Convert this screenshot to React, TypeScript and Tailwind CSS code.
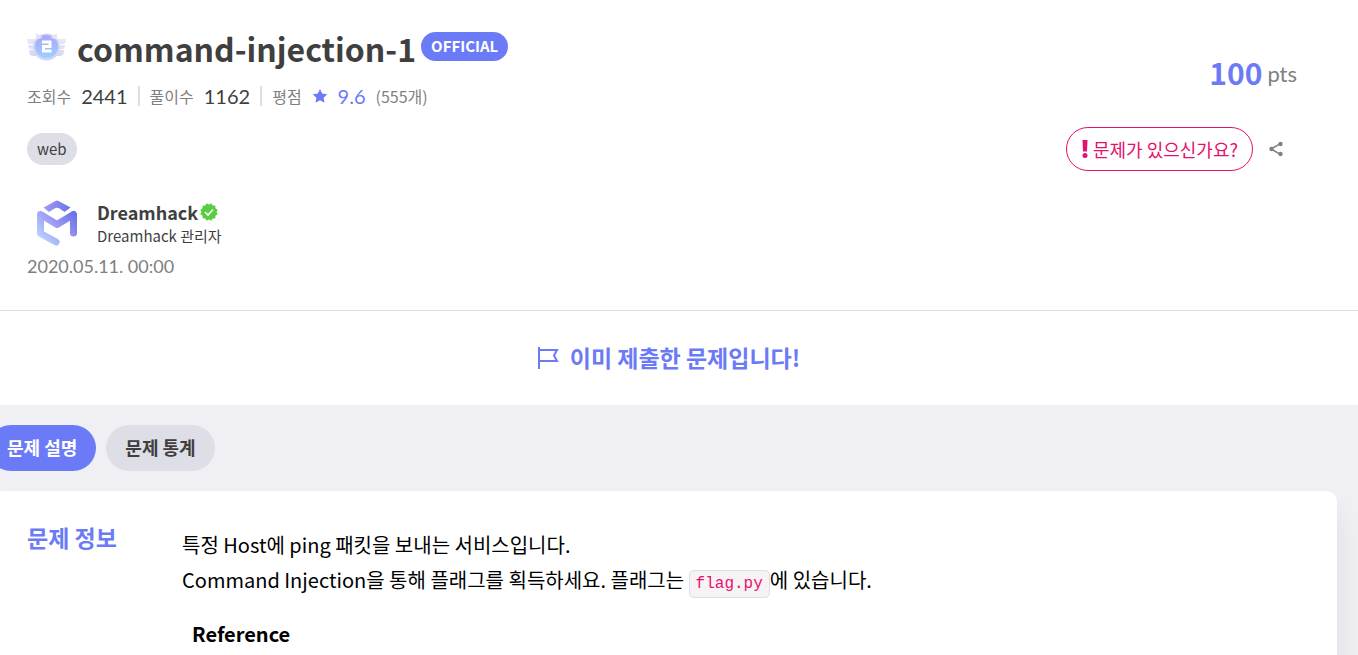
const STATS = [
  { label: '조회수', value: '2441' },
  { label: '풀이수', value: '1162' },
];

const TABS = [
  { label: '문제 설명', active: true },
  { label: '문제 통계', active: false },
];

function TierBadge() {
  return (
    <svg viewBox="0 0 40 30" className="h-[30px] w-10" aria-hidden="true">
      <defs>
        <linearGradient id="tier" x1="0" y1="0" x2="0" y2="1">
          <stop offset="0" stopColor="#a9a6f9" />
          <stop offset="1" stopColor="#9ad2ff" />
        </linearGradient>
        <linearGradient id="wing" x1="0" y1="0" x2="0" y2="1">
          <stop offset="0" stopColor="#e9e9f6" />
          <stop offset="1" stopColor="#d8d6f5" />
        </linearGradient>
      </defs>
      <g fill="url(#wing)">
        <path d="M0 7h10v5H3c-2 0-3-2-3-5zM1 13h9v4H4c-2 0-3-2-3-4zM2 18h8l3 6H6c-3 0-4-3-4-6z" />
        <path d="M39 7H29v5h7c2 0 3-2 3-5zM38 13h-9v4h6c2 0 3-2 3-4zM37 18h-8l-3 6h7c3 0 4-3 4-6z" />
      </g>
      <circle cx="19.500" cy="15" r="13.500" fill="#d6d4f6" />
      <circle cx="19.500" cy="14.500" r="11.500" fill="url(#tier)" />
      <path d="M8.500 8l1-7 6 4.500zM30.500 8l-1-7-6 4.500z" fill="#e4e3f6" />
      <path d="M15 10h8v4.500h-6.500v4.500H24.500" fill="none" stroke="#fff" strokeWidth="3" />
    </svg>
  );
}

function DreamhackLogo() {
  return (
    <svg viewBox="0 0 60 60" className="h-[60px] w-[60px]" role="img" aria-label="Dreamhack">
      <defs>
        <linearGradient id="roof" x1="0" y1="0" x2="1" y2="0">
          <stop offset="0" stopColor="#a49df3" />
          <stop offset="1" stopColor="#6573e8" />
        </linearGradient>
        <linearGradient id="body" gradientUnits="userSpaceOnUse" x1="48" y1="20" x2="14" y2="50">
          <stop offset="0" stopColor="#646fe6" />
          <stop offset="0.500" stopColor="#9b99f4" />
          <stop offset="1" stopColor="#bcd5ff" />
        </linearGradient>
      </defs>
      <path d="M16.500 16.500l12-6.500q1.500-.8 3 0l12 6.500-6 4.500-5-3.500q-2.500-1.500-5 0L22 21z" fill="url(#roof)" />
      <path d="M29 51L13.500 42.500V23.500L30 33.500l16.500-10v18.500" fill="none" stroke="url(#body)" strokeWidth="7" strokeLinecap="round" strokeLinejoin="round" />
    </svg>
  );
}

function VerifiedIcon() {
  return (
    <svg viewBox="0 0 20 20" className="h-5 w-5" role="img" aria-label="verified">
      <g fill="#58cc43">
        {[0, 30, 60].map(deg => (
          <rect key={deg} x="3.600" y="3.600" width="12.800" height="12.800" transform={`rotate(${deg} 10 10)`} />
        ))}
      </g>
      <path d="M6 10l3 3 5-5.500" fill="none" stroke="#fff" strokeWidth="1.600" />
    </svg>
  );
}

export default function App() {
  return (
    <main className="min-h-screen overflow-hidden bg-white font-['Noto_Sans_CJK_KR',sans-serif] text-[#3f3f3f]">
      <header className="flex justify-between border-b border-[#dedee6] pt-5 pr-[61px] pb-[29px] pl-[27px]">
        <div>
          <div className="flex h-14 items-start">
            <span className="mt-3 mr-[10px]"><TierBadge /></span>
            <h1 className="mr-[5px] text-[32px] leading-[56px] font-bold">command-injection-1</h1>
            <span className="mt-3 flex h-[29px] items-center rounded-full bg-[#6b7bf8] px-[10px] pb-[2px] text-[15px] leading-5 font-bold text-white">OFFICIAL</span>
          </div>

          <div className="mt-[5px] flex h-[30px] items-center text-[16px] text-[#808080]">
            {STATS.map(stat => (
              <div key={stat.label} className="mr-[10px] flex h-5 items-center border-r-2 border-[#dedee6] pr-[10px] leading-5">
                <span>{stat.label}</span>
                <span className="ml-[10px] font-['Lato'] text-[20px] text-[#3f3f3f]">{stat.value}</span>
              </div>
            ))}
            <span>평점</span>
            <svg viewBox="0 0 16 16" className="mx-[10px] h-4 w-4" fill="#6b7bf8" aria-hidden="true">
              <path d="M8 1l2.200 4.500 5 .7-3.600 3.500.9 5L8 12.300 3.500 14.700l.9-5L.8 6.200l5-.7z" />
            </svg>
            <span className="font-['Lato'] text-[20px] text-[#6b7bf8]">9.6</span>
            <span className="ml-[10px]">(555개)</span>
          </div>

          <a href="#web" className="mt-[22px] inline-flex h-8 items-center rounded-full bg-[#dedee6] px-[10px] text-[15px] leading-5">web</a>

          <div className="mt-[26px] flex h-[60px] items-center">
            <DreamhackLogo />
            <div className="ml-[10px] pt-[5px]">
              <a href="#dreamhack" className="flex items-center gap-px text-[18px] leading-6 font-bold">
                Dreamhack <VerifiedIcon />
              </a>
              <p className="text-[15px] leading-6">Dreamhack 관리자</p>
            </div>
          </div>
          <time dateTime="2020-05-11T00:00" className="block font-['Lato'] text-[18px] leading-[30px] text-[#808080]">2020.05.11. 00:00</time>
        </div>

        <div className="flex flex-col items-end pt-[30px]">
          <p className="flex items-center gap-[5px] leading-10">
            <strong className="text-[30px] font-bold text-[#6b7bf8]">100</strong>
            <span className="pt-1 font-['Lato'] text-[22px] text-[#808080]">pts</span>
          </p>
          <div className="mt-[33px] flex items-center gap-2 pr-[6px]">
            <button type="button" className="flex h-11 items-center gap-1 rounded-full border border-[#e6106d] px-[14px] text-[18px] leading-6 text-[#e6106d]">
              <svg viewBox="0 0 8 20" className="h-5 w-2" fill="currentColor" aria-hidden="true">
                <path d="M1.500 1h5L6 12.500H2z" />
                <circle cx="4" cy="16.500" r="2.500" />
              </svg>
              문제가 있으신가요?
            </button>
            <button type="button" aria-label="공유" className="flex h-[30px] w-[30px] items-center justify-center text-[#808080]">
              <svg viewBox="0 0 16 16" className="h-4 w-4" fill="currentColor" aria-hidden="true">
                <path d="M3 8l9-5.200M3 8l9 5.200" stroke="currentColor" strokeWidth="1.500" />
                <circle cx="3.500" cy="8" r="2.200" />
                <circle cx="12.500" cy="3" r="2.200" />
                <circle cx="12.500" cy="13" r="2.200" />
              </svg>
            </button>
          </div>
        </div>
      </header>

      <section className="flex h-[94px] items-center justify-center gap-[11px] pr-[21px] text-[#6b7bf8]">
        <svg viewBox="0 0 22 24" className="h-6 w-[22px]" fill="none" stroke="currentColor" strokeWidth="2" aria-hidden="true">
          <path d="M2 1v22M2 4h18l-3 5.500 3 5.500H2" />
        </svg>
        <p className="pb-[2px] text-[23px] leading-8 font-bold">이미 제출한 문제입니다!</p>
      </section>

      <div className="bg-[#f0eff4] pt-5 pr-[21px]">
        <div className="-ml-3 flex gap-[10px]" role="tablist">
          {TABS.map(tab => (
            <button key={tab.label} type="button" role="tab" aria-selected={tab.active}
              className={`h-[46px] rounded-full px-[19px] pb-[2px] text-[18px] leading-6 font-bold ${tab.active ? 'bg-[#6b7bf8] text-white' : 'bg-[#dedee6]'}`}>
              {tab.label}
            </button>
          ))}
        </div>

        <article className="mt-5 flex rounded-tr-[10px] bg-white pt-[30px] pb-10 pl-[27px] shadow-[0_20px_30px_rgba(0,0,0,0.08)]">
          <h2 className="w-[155px] shrink-0 text-[23px] leading-8 font-bold text-[#6b7bf8]">문제 정보</h2>
          <div className="pt-[6px] text-[20px] leading-[35px] text-black">
            <p>
              특정 Host에 ping 패킷을 보내는 서비스입니다.<br />
              Command Injection을 통해 플래그를 획득하세요. 플래그는{' '}
              <code className="rounded-[5px] border border-[#dedee6] bg-[#f7f2f5] px-[6px] py-1 font-['Liberation_Mono'] text-[16px] text-[#e6106d]">flag.py</code>에 있습니다.
            </p>
            <h3 className="mt-[14px] ml-[10px] font-bold">Reference</h3>
          </div>
        </article>
      </div>
    </main>
  );
}
